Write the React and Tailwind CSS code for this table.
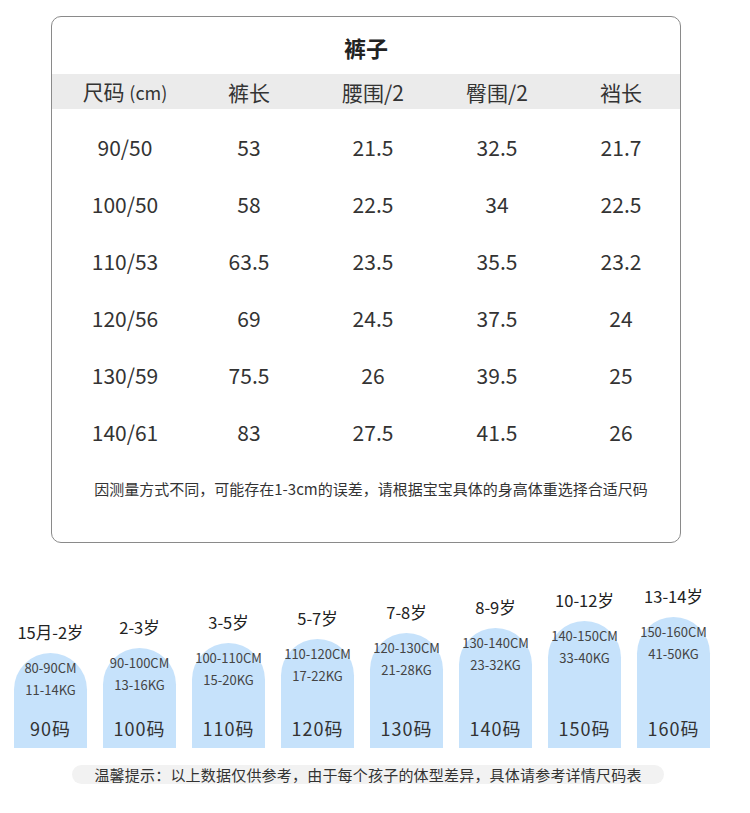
import React from 'react';

const font = { fontFamily: '"Noto Sans CJK SC", "Noto Sans", sans-serif' };

const rows = [
    ['90/50', '53', '21.5', '32.5', '21.7'],
    ['100/50', '58', '22.5', '34', '22.5'],
    ['110/53', '63.5', '23.5', '35.5', '23.2'],
    ['120/56', '69', '24.5', '37.5', '24'],
    ['130/59', '75.5', '26', '39.5', '25'],
    ['140/61', '83', '27.5', '41.5', '26'],
];

const sizes = [
    { age: '15月-2岁', cm: '80-90CM', kg: '11-14KG', code: '90码', h: 'h-[95px]' },
    { age: '2-3岁', cm: '90-100CM', kg: '13-16KG', code: '100码', h: 'h-[100px]' },
    { age: '3-5岁', cm: '100-110CM', kg: '15-20KG', code: '110码', h: 'h-[105px]' },
    { age: '5-7岁', cm: '110-120CM', kg: '17-22KG', code: '120码', h: 'h-[109px]' },
    { age: '7-8岁', cm: '120-130CM', kg: '21-28KG', code: '130码', h: 'h-[115px]' },
    { age: '8-9岁', cm: '130-140CM', kg: '23-32KG', code: '140码', h: 'h-[120px]' },
    { age: '10-12岁', cm: '140-150CM', kg: '33-40KG', code: '150码', h: 'h-[127px]' },
    { age: '13-14岁', cm: '150-160CM', kg: '41-50KG', code: '160码', h: 'h-[131px]' },
];

function App() {
    return (
        <div style={font} className="w-[750px] h-[813px] bg-white text-[#333] overflow-hidden">
            {/* size table */}
            <div className="ml-[51px] mt-[16px] w-[630px] h-[527px] border border-[#8a8a8a] rounded-[10px] flex flex-col">
                <div className="h-[57px] pt-[18px] text-center text-[22px] leading-[24px] font-bold text-[#222]">裤子</div>
                <div className="h-[35px] bg-[#ebebeb] grid grid-cols-[repeat(5,124px)] pl-[11px] items-center text-[21px] leading-[34px]">
                    <div className="text-center">尺码 <span className="text-[18px]">(cm)</span></div>
                    <div className="text-center">裤长</div>
                    <div className="text-center">腰围/2</div>
                    <div className="text-center">臀围/2</div>
                    <div className="text-center">裆长</div>
                </div>
                <div className="pt-[10px]">
                    {rows.map((r) => (
                        <div key={r[0]} className="h-[57px] grid grid-cols-[repeat(5,124px)] pl-[11px] items-center text-[21px]">
                            {r.map((c, i) => (
                                <div key={i} className="text-center">{c}</div>
                            ))}
                        </div>
                    ))}
                </div>
                <p className="mt-[18px] text-center text-[15px] leading-[20px] pl-[10px]">
                    因测量方式不同，可能存在1-3cm的误差，请根据宝宝具体的身高体重选择合适尺码
                </p>
            </div>

            {/* size cards */}
            <div className="h-[205px] flex items-end gap-[16px] pl-[14px]">
                {sizes.map((s) => (
                    <div key={s.code} className="w-[73px] flex flex-col items-center">
                        <div className="text-[16.5px] leading-[20px] text-[#222] whitespace-nowrap mb-[11px]">{s.age}</div>
                        <div className={`w-[73px] ${s.h} bg-[#c6e2fb] rounded-t-[37px] flex flex-col items-center pt-[7px] pb-[9px] text-[#444]`}>
                            <div className="text-[13px] leading-[16px] whitespace-nowrap">{s.cm}</div>
                            <div className="text-[13px] leading-[16px] mt-[6px] whitespace-nowrap">{s.kg}</div>
                            <div className="mt-auto text-[18px] leading-[22px] text-[#333] tracking-[1px]">{s.code}</div>
                        </div>
                    </div>
                ))}
            </div>

            <div className="ml-[72px] mt-[17px] w-[592px] h-[19px] rounded-full bg-[#f2f2f2] text-center text-[15px] leading-[19px] tracking-[0.2px]">
                温馨提示：以上数据仅供参考，由于每个孩子的体型差异，具体请参考详情尺码表
            </div>
        </div>
    );
}

export default App;
